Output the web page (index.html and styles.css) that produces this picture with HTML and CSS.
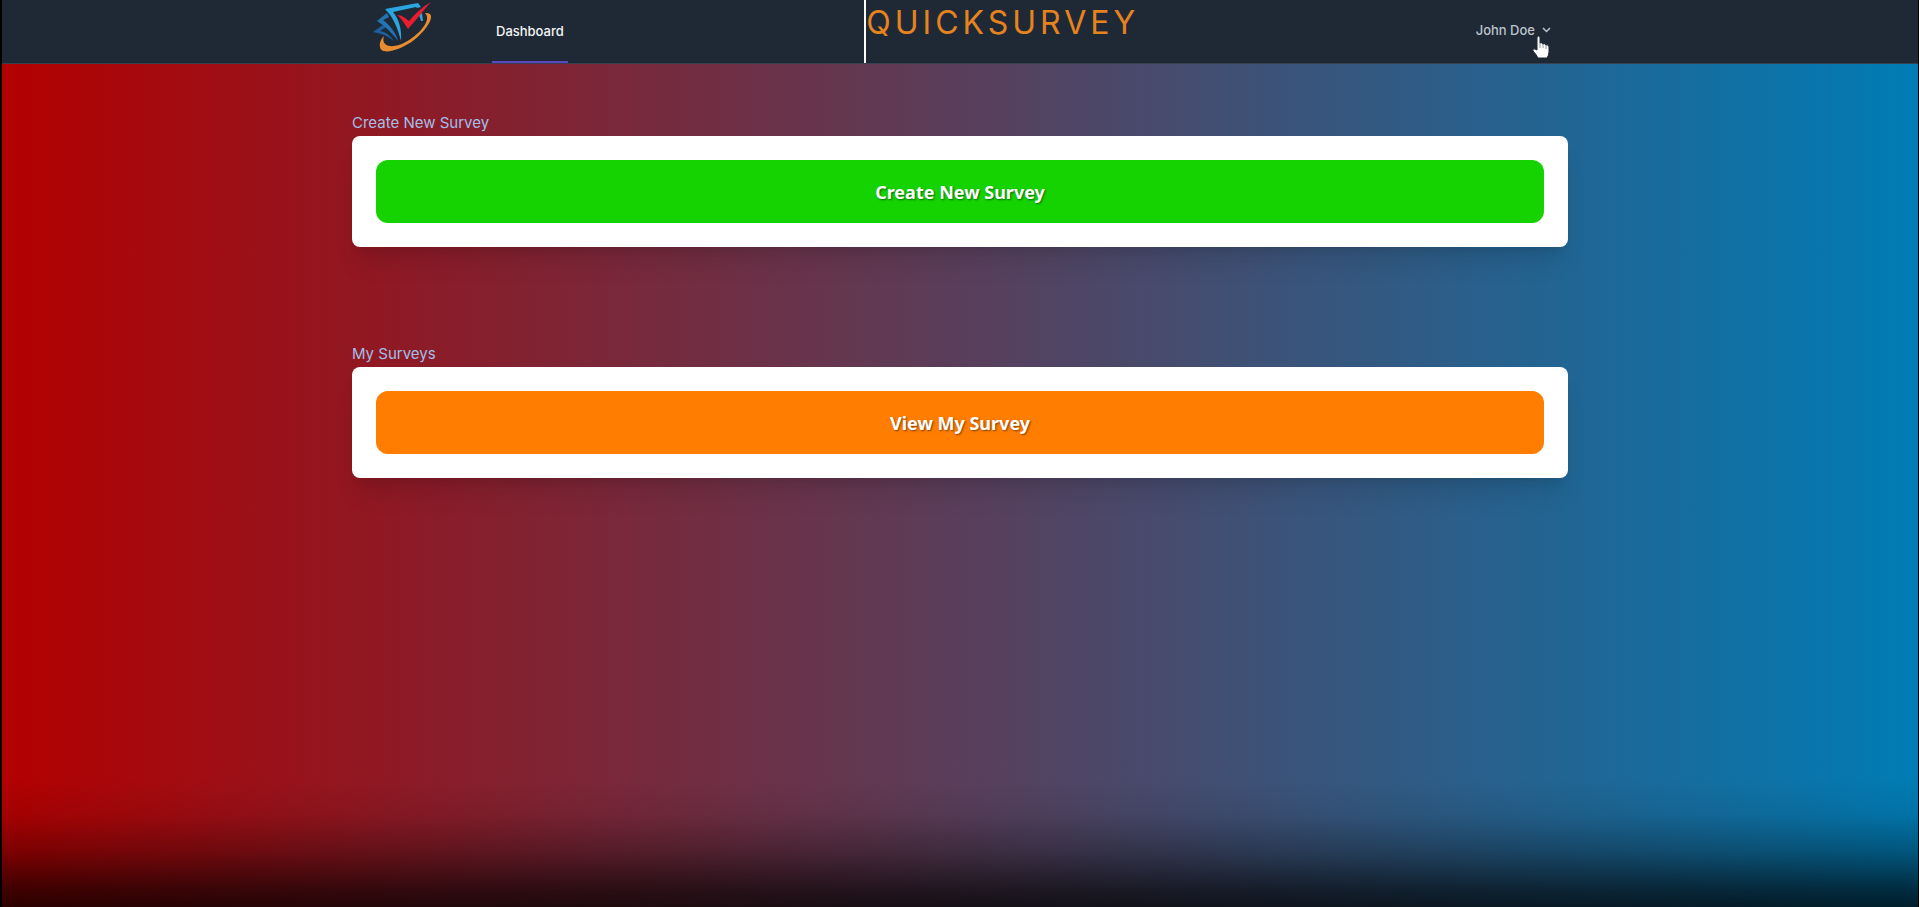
FILE: index.html
```html
<!DOCTYPE html>
<html lang="en">
<head>
<meta charset="utf-8">
<meta name="viewport" content="width=device-width, initial-scale=1">
<title>QuickSurvey</title>
<link rel="stylesheet" href="styles.css">
</head>
<body>
<div class="page">
  <header class="topbar">
    <div class="container topbar-row">
      <nav class="nav">
        <a class="logo" href="#" aria-label="Home">
          <svg width="62" height="52" viewBox="0 0 62 52" aria-hidden="true">
            <path fill="#1b5f9e" d="M1 32 L11 25 L14 27 L8 31 C14 32 19 36 22 41 C16 36 9 33 1 32Z"/>
            <path fill="#2374b5" d="M5 21 L15 13 L17 17 L11 20 C18 25 24 33 26 41 C21 34 13 26 5 21Z"/>
            <path fill="#2ba6e0" d="M13 9 L46 3 L49 7 L45 8 L44 7 L21 12 C27 19 30 30 29 41 C26 29 22 18 13 9Z"/>
            <path fill="#2ba6e0" d="M47 15 L50 13 L51 21 L49 21Z"/>
            <path fill="#ec1c2e" d="M25 15 C30 15 33 18 37 21 C43 14 50 7 59 2 C51 11 45 19 36 29 C32 23 30 19 25 15Z"/>
            <path fill="#e78d30" d="M53 13 C66 12 56 29 42 40 C29 50 9 56 8 47 C7 43 9 39 12 36 C9 45 17 48 27 45 C40 41 62 22 53 13Z"/>
          </svg>
        </a>
        <a class="nav-link" href="#">Dashboard</a>
      </nav>
      <h1 class="brand">QUICKSURVEY</h1>
      <button class="user" type="button">
        <span>John Doe</span>
        <svg width="9" height="6" viewBox="0 0 9 6" aria-hidden="true"><path d="M1 1l3.500 3.500L8 1" fill="none" stroke="currentColor" stroke-width="1.500"/></svg>
        <svg class="pointer" width="18" height="24" viewBox="0 0 18 24" aria-hidden="true"><path fill="#fff" stroke="#1f2937" stroke-width="1" d="M5 2Q7 0 8 2V8Q10 7 11 9Q13 8 14 10Q17 9 17 12V17Q17 20 15 23H6Q4 19 1 16Q0 13 3 14L5 15Z"/><path d="M8 8v5M11 9v4M14 10v4" stroke="#8d949e" stroke-width="1"/></svg>
      </button>
    </div>
  </header>
  <main class="container main">
    <section class="block">
      <h2 class="label">Create New Survey</h2>
      <div class="card"><button class="action create" type="button">Create New Survey</button></div>
    </section>
    <section class="block">
      <h2 class="label">My Surveys</h2>
      <div class="card"><button class="action view" type="button">View My Survey</button></div>
    </section>
  </main>
</div>
</body>
</html>
```
FILE: styles.css
```css
* {
  box-sizing: border-box;
}

body {
  margin: 0;
  background: #000;
  font-family: Inter, "Liberation Sans", sans-serif;
}

.page {
  min-height: 100vh;
  margin: 0 1px 0 2px;
  background:
    linear-gradient(to top, rgba(0, 0, 0, 0.75), rgba(0, 0, 0, 0.66) 16px, rgba(0, 0, 0, 0.3) 56px, rgba(0, 0, 0, 0.08) 92px, transparent 128px),
    linear-gradient(to right, #b30000, #007cb5);
}

.container {
  max-width: 1280px;
  margin: 0 auto;
  padding: 0 32px;
}

.topbar {
  background: #1f2935;
  border-bottom: 1px solid #374151;
}

.topbar-row {
  display: flex;
  justify-content: space-between;
  height: 63px;
}

.nav {
  display: flex;
  gap: 58px;
  padding-left: 20px;
}

.logo {
  display: block;
}

.logo svg {
  display: block;
}

.nav-link {
  display: flex;
  align-items: center;
  padding: 0 4px;
  border-bottom: 2px solid #5b45c0;
  color: #f3f4f6;
  font-size: 13px;
  font-weight: 500;
  text-decoration: none;
}

.brand {
  margin: 0;
  padding-right: 28px;
  border-left: 2px solid #fff;
  color: #e6831e;
  font-size: 32px;
  font-weight: 400;
  line-height: 46px;
  letter-spacing: 4px;
}

.user {
  position: relative;
  display: flex;
  align-items: center;
  gap: 7px;
  padding: 0 17px 3px 12px;
  border: 0;
  background: none;
  color: #bcc3cc;
  font: 500 13px Inter, "Liberation Sans", sans-serif;
  cursor: pointer;
}

.pointer {
  position: absolute;
  right: 18px;
  top: 35px;
}

.main {
  display: grid;
  gap: 96px;
  padding-top: 48px;
}

.label {
  margin: 0;
  padding-bottom: 2px;
  color: #a3bfe6;
  font-size: 15px;
  font-weight: 400;
  line-height: 22px;
}

.card {
  padding: 24px;
  border-radius: 8px;
  background: #fff;
  box-shadow: 0 20px 25px -5px rgba(0, 0, 0, 0.1), 0 8px 10px -6px rgba(0, 0, 0, 0.1);
}

.action {
  display: block;
  width: 100%;
  height: 63px;
  border: 0;
  border-radius: 12px;
  color: #fff;
  font: 700 18px "Noto Sans", "Open Sans", sans-serif;
  text-shadow: 1px 1px 2px rgba(0, 0, 0, 0.5);
  cursor: pointer;
}

.create {
  background: #14d300;
}

.view {
  background: #ff7d00;
}
```
